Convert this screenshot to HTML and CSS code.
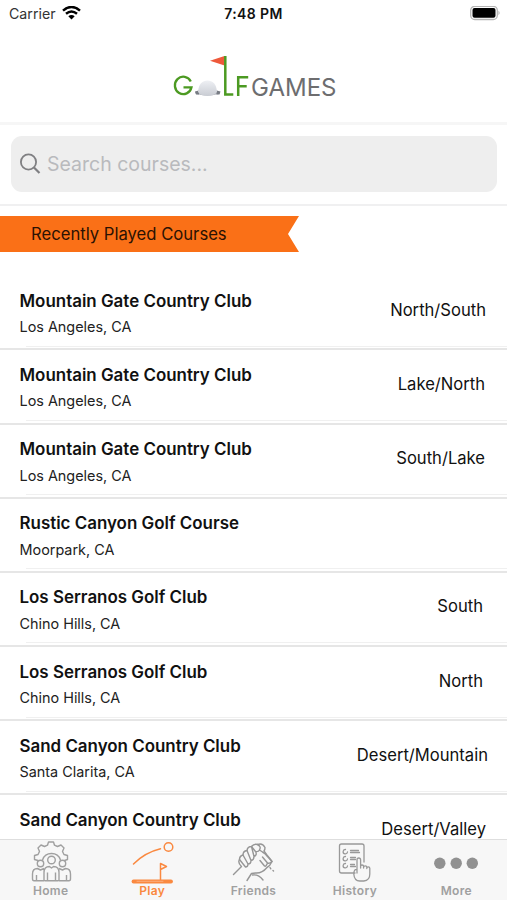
FILE: index.html
```html
<!DOCTYPE html>
<html lang="en">
<head>
<meta charset="utf-8">
<title>Golf Games</title>
<link rel="stylesheet" href="styles.css">
</head>
<body>
<div class="app">
  <header class="header">
    <div class="status">
      <div class="carrier"><span>Carrier</span>
        <svg width="19" height="15" viewBox="0 0 19 15" fill="none" stroke="#000" stroke-width="2.5"><path d="M1 4.600Q9.500-2.600 18 4.600M4 7.800Q9.500 3.200 15 7.800"/><path d="M6.300 10.200Q9.500 7.700 12.700 10.200L9.500 13.500Z" fill="#000" stroke="none"/></svg>
      </div>
      <div class="time">7:48 PM</div>
      <svg class="battery" width="31" height="15" viewBox="0 0 31 15"><rect x=".7" y=".3" width="26.600" height="13.200" rx="4" fill="#fff" stroke="#b5b5b5" stroke-width="1.300"/><rect x="2.500" y="2.100" width="23" height="9.600" rx="2" fill="#000"/><path d="M28.500 4.500q2.200 2.400 0 4.800z" fill="#aaa"/></svg>
    </div>
    <svg class="logo" width="185" height="60" viewBox="160 45 185 60">
      <defs><linearGradient id="ball" x1="0" y1="0" x2="0" y2="1"><stop offset="0" stop-color="#eef0f4"/><stop offset="1" stop-color="#c9ccd3"/></linearGradient></defs>
      <path d="M189.800 81.500A8.400 8.700 0 1 0 190.500 87.300H182.500" fill="none" stroke="#4c9a22" stroke-width="2.300"/>
      <ellipse cx="206.500" cy="92.500" rx="12.500" ry="3" fill="#b4b7be"/>
      <path d="M194 91.500l4-1v4h-3zM219.500 91.500l-4-1v4h3z" fill="#777b83"/>
      <path d="M197 92C197.500 84 201.500 80.500 206.500 80.500s9 3.500 9.500 11.500q-3 4-9.500 4t-9.500-4z" fill="url(#ball)"/>
      <path d="M209 60.800L223.500 56v9.500z" fill="#ee593b"/>
      <path d="M224.300 56v38.500h8" fill="none" stroke="#4c9a22" stroke-width="2.500"/>
      <path d="M237.200 96V77.200h10M237.200 86.200h8.500" fill="none" stroke="#4c9a22" stroke-width="2.500"/>
      <text class="logo-games" x="250" y="95.500" textLength="85.500" lengthAdjust="spacingAndGlyphs">GAMES</text>
    </svg>
  </header>
  <div class="search-bar">
    <div class="search">
      <svg width="22" height="22" viewBox="0 0 22 22" fill="none" stroke="#7f7f82" stroke-width="1.800"><circle cx="8.500" cy="9" r="7.600"/><path d="M14 14.500l5.500 5.500" stroke-width="2.200"/></svg>
      <span>Search courses...</span>
    </div>
  </div>
  <div class="ribbon"><span>Recently Played Courses</span></div>
  <main class="courses">
    <div class="row"><div><div class="name">Mountain Gate Country Club</div><div class="place">Los Angeles, CA</div></div><div class="nine">North/South</div></div>
    <div class="row"><div><div class="name">Mountain Gate Country Club</div><div class="place">Los Angeles, CA</div></div><div class="nine nine-mid">Lake/North</div></div>
    <div class="row"><div><div class="name">Mountain Gate Country Club</div><div class="place">Los Angeles, CA</div></div><div class="nine nine-mid">South/Lake</div></div>
    <div class="row"><div><div class="name">Rustic Canyon Golf Course</div><div class="place">Moorpark, CA</div></div></div>
    <div class="row"><div><div class="name">Los Serranos Golf Club</div><div class="place">Chino Hills, CA</div></div><div class="nine nine-short">South</div></div>
    <div class="row"><div><div class="name">Los Serranos Golf Club</div><div class="place">Chino Hills, CA</div></div><div class="nine nine-short">North</div></div>
    <div class="row"><div><div class="name">Sand Canyon Country Club</div><div class="place">Santa Clarita, CA</div></div><div class="nine nine-long">Desert/Mountain</div></div>
    <div class="row"><div><div class="name">Sand Canyon Country Club</div></div><div class="nine">Desert/Valley</div></div>
  </main>
  <nav class="tabs">
    <div class="tab">
      <svg width="44" height="44" viewBox="0 0 44 44" fill="none" stroke="#a0a0a0" stroke-width="1.400" stroke-linejoin="round">
        <path d="M9 20.500L5.500 19.500V15.500l3.500-1 1.500-3-1.500-3.500 3-3 3.500 1.500 3-1.300 1-3.200h5l1 3.200 3 1.300L32 5l3 3-1.500 3.500 1.500 3 3.500 1v4L35.500 20.500M13.500 20a9.500 9.500 0 0 1 18 0"/>
        <circle cx="22.500" cy="20" r="3.800"/><circle cx="11.500" cy="23.500" r="3.200"/><circle cx="33.500" cy="23.500" r="3.200"/>
        <path d="M15 39.800V32.500q0-6 5.500-6l2 1.500 2-1.500q5.500 0 5.500 6v7.300q0 1-1 1H16q-1 0-1-1zM15 40.800H5q-1.500 0-1.500-2V34q0-5.500 5-5.500l3 1.500 3.500-1.500M30 40.800h10q1.500 0 1.500-2V34q0-5.500-5-5.500l-3 1.500-3.500-1.500M18.500 40.500v-8M26.500 40.500v-8M7.500 40.500v-5.500M37.500 40.500v-5.500"/>
      </svg><span>Home</span>
    </div>
    <div class="tab active">
      <svg width="44" height="44" viewBox="0 0 44 44" fill="none" stroke="#fa8940" stroke-width="1.500" stroke-linecap="round" stroke-linejoin="round">
        <path d="M3.500 24Q15 12.500 30.500 8.800"/><circle cx="38.500" cy="7" r="4.300"/><path d="M30.500 40V23.500l6 3-6 3"/><path d="M3.500 41.500h37.500" stroke-width="3.800"/><path d="M7 41.300h26" stroke="#fcae7c" stroke-width="1"/>
      </svg><span>Play</span>
    </div>
    <div class="tab">
      <svg width="44" height="44" viewBox="0 0 44 44" fill="none" stroke="#969696" stroke-width="1.400" stroke-linecap="round" stroke-linejoin="round">
        <path d="M2.500 34.500L10.500 26.500M10.500 26.500Q6.500 23 8.500 19.500q0-3.500 3.500-4.500 0-4 4-4.500.5-4 4.500-4Q23 3.500 26.500 4.500q5-2 7.500 3 0 2-1 3.500l2.500 3.500q3 3.500 5.500 7-2 4.500-5 6-5 6-11.500 5.500l-4 .5L16 40.500"/>
        <path d="M8.500 19.500l6 7.500q2.500 0 2.500-3l-5-9M17 24q3 0 3-3.500L16 10.500M20 20.500q3-.5 3-4L20.500 6.500M23 16.500q3.500-1.500 1.500-5L20.500 6.500M26.500 4.500q4 2 2 5.500-1 2-4 1.500M28.500 10l3 2q3 1.500 5 4.500l4.500 5M31.500 17l5 6q2 1 4.500-1.500M29 20.500l4.500 5.500q1.500 1 3-3M21.500 35q6-1 10.500 5M39 27.500l.8 1.300M42 30.500l.5.500"/>
      </svg><span>Friends</span>
    </div>
    <div class="tab">
      <svg width="44" height="44" viewBox="0 0 44 44" fill="none" stroke="#999" stroke-width="1.300" stroke-linecap="round" stroke-linejoin="round">
        <path d="M22 33H8.500q-2 0-2-2V6q0-2 2-2h20.500q2 0 2 2v16"/>
        <path d="M17.500 10.500h8M17.500 12.500h9M17.500 17.500h5M17.500 19.500h5M17.500 24.500h4M17.500 26.500h5"/>
        <path d="M12.500 9.500a2.200 2.200 0 1 0 2 2.500M12.500 16.500a2.200 2.200 0 1 0 2 2.500M12.500 23.500a2.200 2.200 0 1 0 2 2.500"/>
        <path d="M24 33V20q0-2 1.800-2t1.800 2v8-2q0-1 1.500-1t1.500 1.300v1.700-1q0-1.200 1.600-1.200t1.600 1.200v1.500-.5q0-1.200 1.500-1.200t1.500 1.500V34q0 6.500-6 7h-4q-5.500 0-6-7 0-5 3.200-4.500"/>
      </svg><span>History</span>
    </div>
    <div class="tab">
      <svg width="44" height="44" viewBox="0 0 44 44" fill="#919191"><circle cx="5.800" cy="23.300" r="5.700"/><circle cx="22.200" cy="23.300" r="5.700"/><circle cx="38.300" cy="23.300" r="5.700"/></svg><span>More</span>
    </div>
  </nav>
</div>
</body>
</html>
```
FILE: styles.css
```css
* { box-sizing: border-box; }
body { margin: 0; background: #fff; color: #111; font-family: Inter, "Liberation Sans", sans-serif; }
.app { width: 507px; height: 900px; display: flex; flex-direction: column; overflow: hidden; }
.header { height: 125px; flex: none; border-bottom: 3px solid #f6f6f6; display: flex; flex-direction: column; align-items: center; }
.status { width: 100%; height: 27px; padding: 0 6px 0 9px; display: grid; grid-template-columns: 1fr auto 1fr; align-items: center; font-size: 14.2px; }
.carrier { display: flex; align-items: center; gap: 6px; color: #333; }
.time { margin-right: 3px; font-weight: 600; font-size: 14px; letter-spacing: .4px; color: #111; }
.battery { justify-self: end; }
.logo { margin-top: 18px; flex: none; }
.logo-games { font-size: 24.5px; fill: #6d6d6f; }
.search-bar { flex: none; height: 81px; padding: 11px 10px 0 11px; border-bottom: 2px solid #f0f0f1; }
.search { height: 56px; border-radius: 11px; background: #eee; display: flex; align-items: center; gap: 5px; padding-left: 9px; color: #b9babd; font-size: 19.5px; }
.ribbon { flex: none; width: 299px; height: 36px; margin: 10px 0 24.3px; padding-left: 31px; display: flex; align-items: center; background: #fa7017; clip-path: polygon(0 0, 100% 0, 288px 50%, 100% 100%, 0 100%); color: #2b1203; font-size: 16.65px; }
.courses { flex: 1; min-height: 0; overflow: hidden; }
.row { height: 74.150px; padding: 0 21px 0 19.500px; display: flex; justify-content: space-between; border-bottom: 2px solid #e6e6e6; background: linear-gradient(#f0f0f0, #f0f0f0) 26px 69.500px / 100% 1px no-repeat; }
.name { margin-top: 13.500px; line-height: 22px; font-size: 16.930px; font-weight: 600; }
.place { margin-top: 5.500px; line-height: 20px; font-size: 14.400px; color: #222; }
.nine { margin-top: 22.500px; line-height: 22px; font-size: 16.600px; }
.nine-mid { margin-right: 1px; }
.nine-short { margin-right: 3px; }
.nine-long { margin-right: -2px; }
.tabs { flex: none; height: 61px; border-top: 1px solid #dedede; background: #f7f7f7; display: grid; grid-template-columns: repeat(5, 1fr); }
.tab { display: flex; flex-direction: column; align-items: center; color: #a0a0a0; font-size: 12px; font-weight: 600; line-height: 14px; letter-spacing: .3px; }
.tab svg { flex: none; }
.active { color: #fa8940; }
```
